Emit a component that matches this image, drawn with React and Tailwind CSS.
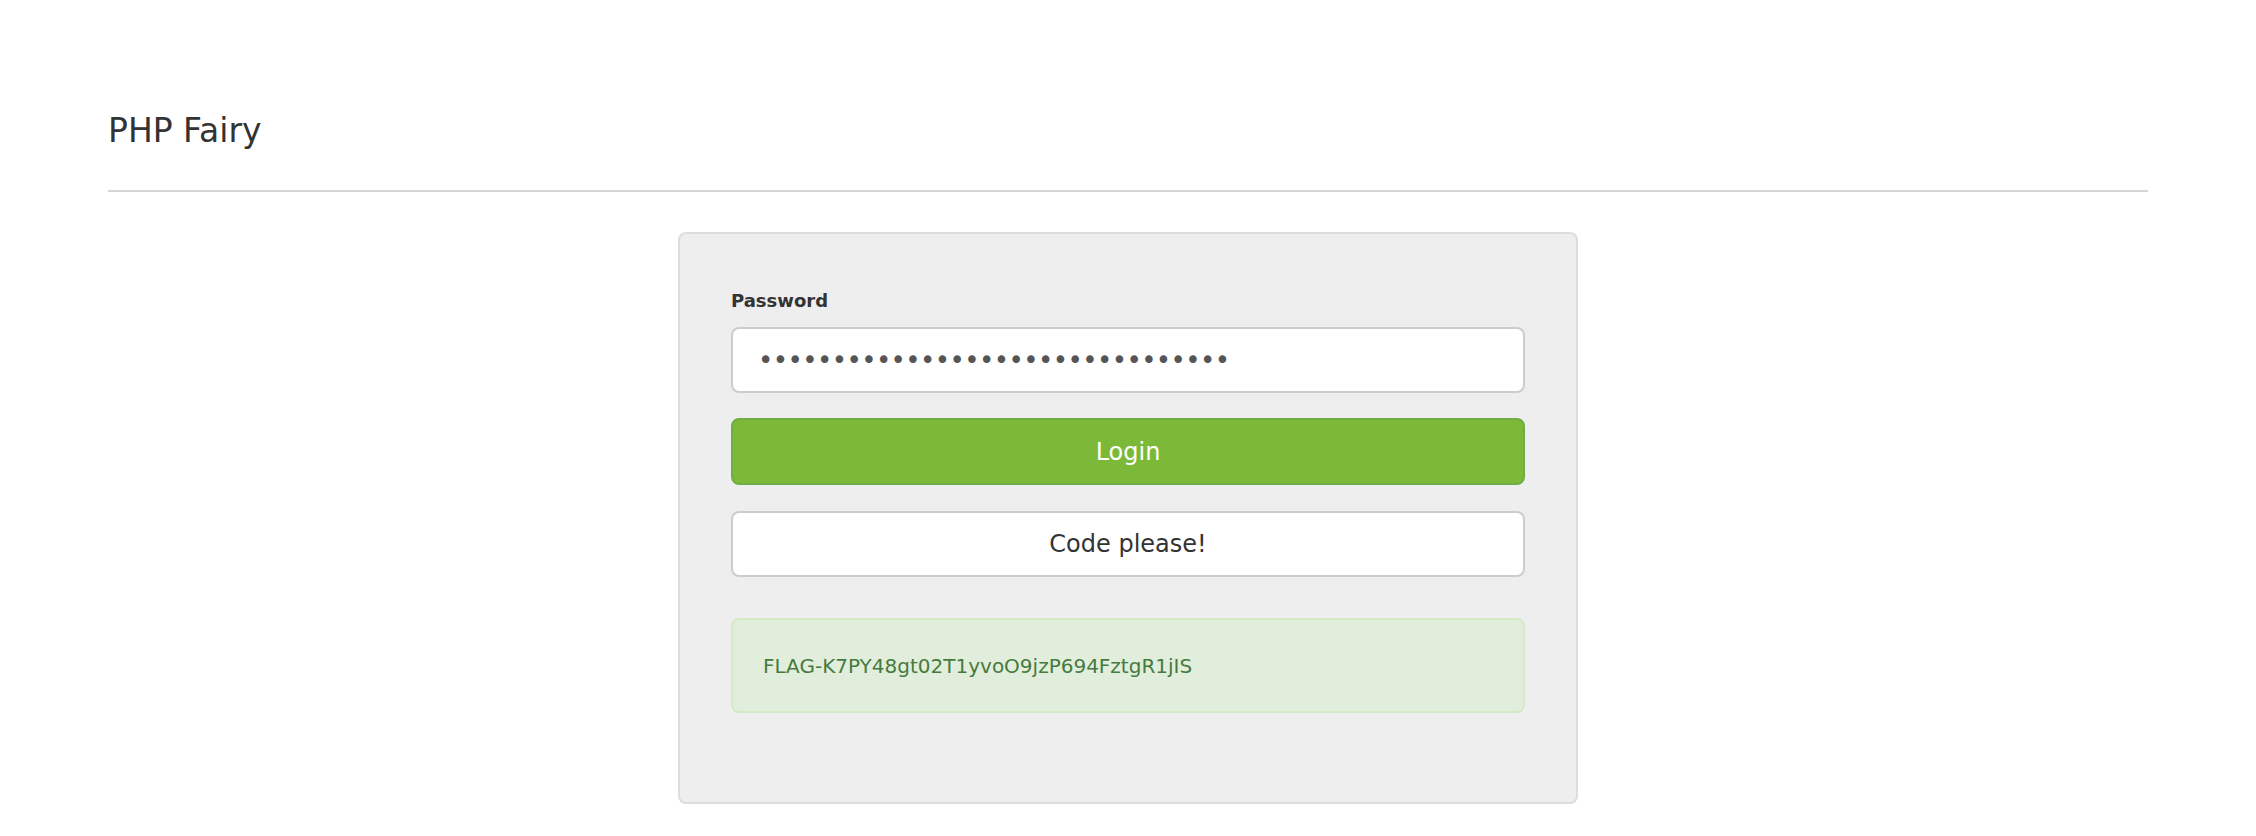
export default function App() {
  return (
    <div
      className="min-h-screen bg-white px-[108px] pt-[113px] text-[#333333]"
      style={{ fontFamily: '"DejaVu Sans", Verdana, sans-serif' }}
    >
      <h1 className="text-[33px] leading-[36px] font-normal">PHP Fairy</h1>

      <hr className="mt-[41px] border-0 border-t-2 border-[#d6d6d6]" />

      <div className="mx-auto mt-[40px] w-[900px] rounded-[8px] border-2 border-[#dddddd] bg-[#eeeeee] px-[51px] pt-[55px] pb-[89px]">
        <label className="block text-[18px] leading-[24px] font-bold text-[#333333]">
          Password
        </label>

        <input
          type="password"
          defaultValue="AAAAAAAAAAAAAAAAAAAAAAAAAAAAAAAA"
          readOnly
          className="mt-[14px] block h-[66px] w-full rounded-[8px] border-2 border-[#cccccc] bg-white pl-[25px] text-[26px] tracking-[-0.6px] text-[#555555] outline-none"
        />

        <button
          type="button"
          className="mt-[25px] block h-[67px] w-full rounded-[8px] border-2 border-[#6fae45] bg-[#7cb939] text-[24px] text-white"
        >
          Login
        </button>

        <button
          type="button"
          className="mt-[26px] block h-[66px] w-full rounded-[8px] border-2 border-[#cccccc] bg-white text-[24px] text-[#333333]"
        >
          Code please!
        </button>

        <div className="mt-[41px] flex h-[95px] items-center rounded-[8px] border-2 border-[#d6e9c6] bg-[#e1eedb] px-[30px] text-[20px] text-[#477a40]">
          FLAG-K7PY48gt02T1yvoO9jzP694FztgR1jIS
        </div>
      </div>
    </div>
  );
}
